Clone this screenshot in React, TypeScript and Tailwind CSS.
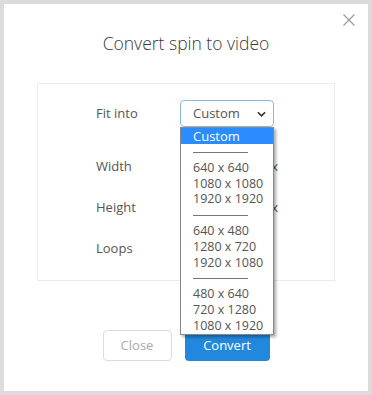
import React from "react";

const groups = [
  ["640 x 640", "1080 x 1080", "1920 x 1920"],
  ["640 x 480", "1280 x 720", "1920 x 1080"],
  ["480 x 640", "720 x 1280", "1080 x 1920"],
];

function Row({ label, children }: { label: string; children?: React.ReactNode }) {
  return (
    <div className="flex h-[27px] items-center">
      <div className="w-[84px] text-[13px] text-[#555]">{label}</div>
      {children}
    </div>
  );
}

export default function App() {
  return (
    <div
      className="h-[395px] w-[372px] bg-[#dcdcdc] p-1"
      style={{ fontFamily: '"Open Sans", "Noto Sans", sans-serif' }}
    >
      <div className="relative flex h-[387px] flex-col bg-white">
        <button className="absolute left-[339px] top-[10px] h-[12px] w-[12px]">
          <svg viewBox="0 0 12 12" className="h-[12px] w-[12px]">
            <path d="M0.5 0.5 L11.5 11.5 M11.5 0.5 L0.5 11.5" stroke="#9a9a9a" strokeWidth="1.2" fill="none" />
          </svg>
        </button>

        <h1 className="pt-[27px] text-center text-[17.5px] font-light leading-[24px] text-[#3a3a3a]">Convert spin to video</h1>

        <div className="mx-[33px] mt-[28px] flex h-[198px] flex-col border border-[#ececec] pl-[58px] pt-[16px]">
          <Row label="Fit into">
            <div className="flex h-[27px] w-[94px] items-center justify-between rounded-[4px] border border-[#8cb8e6] pl-[12px] pr-[7px] text-[13px] text-[#555]">
              <span>Custom</span>
              <svg viewBox="0 0 10 6" className="h-[6px] w-[9px]">
                <path d="M1 1 L5 5 L9 1" stroke="#333" strokeWidth="1.8" fill="none" />
              </svg>
            </div>
          </Row>
          <div className="mt-[26px] flex flex-col gap-[14px]">
            <Row label="Width">
              <div className="flex w-[98px] justify-end text-[13px] text-[#555]">px</div>
            </Row>
            <Row label="Height">
              <div className="flex w-[98px] justify-end text-[13px] text-[#555]">px</div>
            </Row>
            <Row label="Loops" />
          </div>
        </div>

        <div className="mt-[49px] flex justify-center gap-[13px]">
          <button className="h-[31px] w-[69px] rounded-[4px] border border-[#dcdcdc] text-[13px] text-[#aaa]">Close</button>
          <button className="h-[31px] w-[85px] rounded-[4px] bg-[#2288de] text-[13px] text-white">Convert</button>
        </div>

        <div className="absolute left-[176px] top-[123px] w-[94px] border border-[#888] bg-white pb-[1px] text-[12.5px] leading-[15.7px] text-[#555] shadow-[2px_2px_3px_rgba(0,0,0,0.35)]">
          <div className="bg-[#2a8cff] pl-[12px] text-[13px] leading-[16px] text-white">Custom</div>
          {groups.map((g, i) => (
            <div key={i}>
              <div className="flex h-[16px] items-center pl-[12px]">
                <div className="h-px w-[55px] bg-[#777]" />
              </div>
              {g.map((t) => (
                <div key={t} className="pl-[12px]">{t}</div>
              ))}
            </div>
          ))}
        </div>
      </div>
    </div>
  );
}
